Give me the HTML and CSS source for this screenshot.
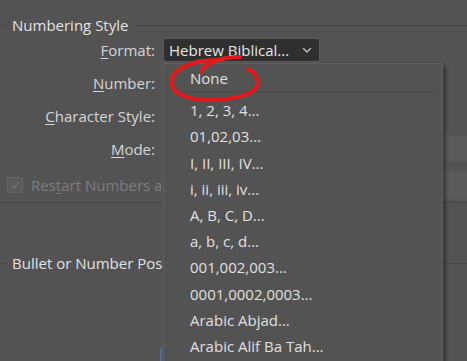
FILE: index.html
```html
<!DOCTYPE html>
<html lang="en">
<head>
  <meta charset="UTF-8" />
  <title>Bullets and Numbering</title>
  <link rel="stylesheet" href="styles.css">
</head>
<body>
  <main class="dialog">
    <div class="group-title"><span>Numbering Style</span></div>

    <div class="form-grid">
      <label class="field-label"><u>F</u>ormat:</label>
      <div class="select">
        <span>Hebrew Biblical...</span>
        <svg class="chevron" width="10" height="6" viewBox="0 0 10 6"><path d="M1 1l4 4 4-4" fill="none" stroke="#bdbdbd" stroke-width="1.4"/></svg>
      </div>

      <label class="field-label"><u>N</u>umber:</label>
      <div class="field-blank"></div>

      <label class="field-label"><u>C</u>haracter Style:</label>
      <div class="field-blank"></div>

      <label class="field-label"><u>M</u>ode:</label>
      <div class="field-blank field-box"></div>
    </div>

    <div class="check-row">
      <span class="checkbox">
        <svg width="10" height="8" viewBox="0 0 10 8"><path d="M1 4l3 3 5-6" fill="none" stroke="#6e6e6e" stroke-width="1.6"/></svg>
      </span>
      <span class="check-label">Res<u>t</u>art Numbers at This Level After:</span>
      <span class="check-box-field"></span>
    </div>

    <div class="separator"></div>

    <div class="group-title group-second"><span class="clipped">Bullet or Number Position</span></div>

    <ul class="menu">
      <li>None</li>
      <li class="menu-sep"></li>
      <li>1, 2, 3, 4...</li>
      <li>01,02,03...</li>
      <li>I, II, III, IV...</li>
      <li>i, ii, iii, iv...</li>
      <li>A, B, C, D...</li>
      <li>a, b, c, d...</li>
      <li>001,002,003...</li>
      <li>0001,0002,0003...</li>
      <li>Arabic Abjad...</li>
      <li>Arabic Alif Ba Tah...</li>
    </ul>

    <span class="focus-mark"></span>

    <svg class="scribble" width="467" height="361" viewBox="0 0 467 361">
      <path d="M201 71 C205 63 220 57 240 57" fill="none" stroke="#e3191b" stroke-width="4" stroke-linecap="round"/>
      <path d="M216 60 C192 60 171 69 171 82 C171 96 194 101 214 100 C238 99 257 93 257 83 C257 75 252 71 247 69" fill="none" stroke="#e3191b" stroke-width="4" stroke-linecap="round"/>
    </svg>
  </main>
</body>
</html>
```

FILE: styles.css
```css
body {
  margin: 0;
  background-color: #535353;
  font-family: 'Open Sans', 'Noto Sans', sans-serif;
  font-size: 15px;
  color: #dcdcdc;
}

.dialog {
  position: relative;
  width: 467px;
  height: 361px;
  overflow: hidden;
}

u {
  text-decoration-thickness: 1px;
  text-underline-offset: 2px;
}

.group-title {
  display: flex;
  align-items: center;
  padding-top: 16px;
  height: 18px;
}

.group-title::before {
  content: '';
  width: 6px;
  border-top: 1px solid #444;
}

.group-title::after {
  content: '';
  flex: 1;
  border-top: 1px solid #444;
}

.group-title span {
  padding: 0 6px;
  color: #e2e2e2;
  white-space: nowrap;
}

.group-title .clipped {
  max-width: 145px;
  overflow: hidden;
}

.group-second {
  padding-top: 51px;
}

.form-grid {
  display: grid;
  grid-template-columns: 155px 1fr;
  grid-auto-rows: 33px;
  column-gap: 8px;
  align-items: center;
  margin-top: -1px;
}

.field-label {
  text-align: right;
  color: #d6d6d6;
}

.select {
  width: 157px;
  height: 24px;
  box-sizing: border-box;
  display: flex;
  align-items: center;
  justify-content: space-between;
  padding: 0 7px 0 5px;
  background-color: #2f2f2f;
  border: 1px solid #5c5c5c;
  border-radius: 3px;
  color: #e6e6e6;
  white-space: nowrap;
}

.field-blank {
  height: 24px;
}

.field-box {
  height: 27px;
  background-color: #595959;
}

.check-row {
  display: flex;
  align-items: center;
  gap: 8px;
  padding: 10px 0 0 7px;
  height: 20px;
}

.checkbox {
  width: 14px;
  height: 14px;
  flex-shrink: 0;
  display: flex;
  align-items: center;
  justify-content: center;
  border: 1px solid #666;
  border-radius: 2px;
  background-color: #5a5a5a;
}

.check-label {
  width: 130px;
  flex-shrink: 0;
  overflow: hidden;
  color: #7e7e7e;
  white-space: nowrap;
}

.check-box-field {
  flex: 1;
  height: 28px;
  background-color: #5a5a5a;
}

.separator {
  margin-top: 7px;
  border-top: 1px solid #444;
}

.menu {
  position: absolute;
  left: 163px;
  top: 63px;
  width: 280px;
  height: 320px;
  margin: 0;
  padding: 1px 0 0;
  list-style: none;
  box-sizing: border-box;
  background-color: #535353;
  border: 1px solid #606060;
  box-shadow: 3px 3px 3px rgba(0, 0, 0, 0.35);
}

.menu li {
  height: 26.2px;
  line-height: 26px;
  padding-left: 26px;
  color: #e0e0e0;
  white-space: nowrap;
}

.menu .menu-sep {
  height: 0;
  margin: 0 4px 5px 4px;
  border-top: 1px solid #4a4a4a;
}

.focus-mark {
  position: absolute;
  left: 160px;
  top: 348px;
  width: 2px;
  height: 13px;
  background-color: #4e6f9e;
}

.scribble {
  position: absolute;
  left: 0;
  top: 0;
  pointer-events: none;
}
```
